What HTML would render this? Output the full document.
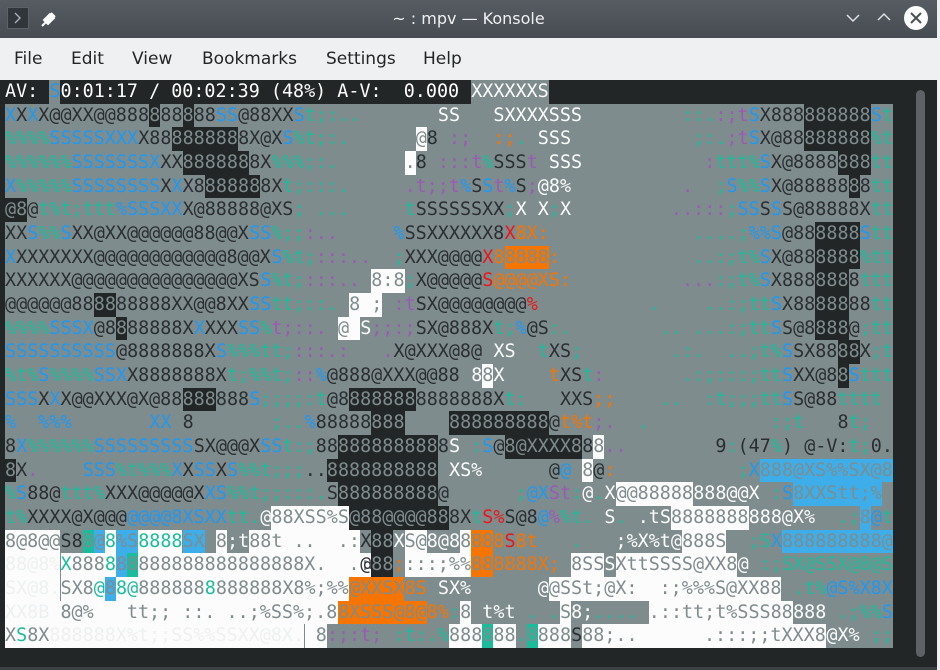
<!DOCTYPE html>
<html><head><meta charset="utf-8"><style>
*{margin:0;padding:0;box-sizing:border-box}
body{width:940px;height:670px;background:#eff0f1;position:relative;overflow:hidden;font-family:"DejaVu Sans Mono","Liberation Mono",monospace}
#win{position:absolute;left:0;top:0;width:937px;height:670px;background:#232627}
#tb{position:absolute;left:0;top:0;width:937px;height:38px;background:linear-gradient(#565c62,#464c52)}
#title{position:absolute;left:0;width:937px;top:9px;text-align:center;color:#eff0f1;font:16px "DejaVu Sans","Liberation Sans",sans-serif}
#mb{position:absolute;left:0;top:38px;width:937px;height:42px;background:#eff0f1;font:17px "DejaVu Sans","Liberation Sans",sans-serif;color:#232627}
#mb span{position:absolute;top:11px}
.r{position:absolute;left:0;width:937px;height:23.67px;font-size:18.4px}
.r.gr::before{content:"";position:absolute;left:5px;width:888px;top:0;height:23.67px;background:#7f8c8d}
.r i{position:absolute;left:calc(5px + var(--c)*11.1px);top:0;height:23.67px;line-height:23.67px;font-style:normal;white-space:pre;color:#2a2e32}
.r i.b{color:#1d99f3}.r i.g{color:#1abc9c}.r i.p{color:#9b59b6}.r i.o{color:#f67400}.r i.r{color:#ed1515}.r i.w{color:#fcfcfc}
.r i.k{background:#232627;color:#7f8c8d}.r i.W{background:#fcfcfc;color:#7f8c8d}.r i.O{background:#f67400;color:#7f8c8d}
.r i.B{background:#3daee9;color:#7f8c8d}.r i.G{background:#1abc9c;color:#7f8c8d}.r i.Y{background:#7f8c8d;color:#fcfcfc}
.r i.Wg{background:#fcfcfc;color:#1abc9c}.r i.Wf{background:#fcfcfc;color:#eef0f1}.r i.Gr{background:#7f8c8d;color:#2a2e32}
#sb{position:absolute;left:916px;top:90px;width:9px;height:567px;border-radius:5px;background:#5d6266}
</style></head><body>
<div id="win">
<div id="tb">
<div style="position:absolute;left:7px;top:7px;width:22px;height:22px;background:#31363b;border:1px solid #5b6167"></div>
<svg style="position:absolute;left:12px;top:11px" width="12" height="14"><path d="M3 2 L8 7 L3 12" stroke="#aab0b5" stroke-width="1.4" fill="none"/></svg>
<svg style="position:absolute;left:40px;top:10px" width="18" height="18"><path d="M6 12 L2 16 M6 12 L4 10 L10 4 L14 8 L8 14 Z M11 3 L15 7" stroke="#fcfcfc" stroke-width="2" fill="#fcfcfc"/></svg>
<div id="title">~ : mpv — Konsole</div>
<svg style="position:absolute;left:845px;top:12px" width="16" height="12"><path d="M2 3 L8 9 L14 3" stroke="#dfe1e3" stroke-width="1.5" fill="none"/></svg>
<svg style="position:absolute;left:876px;top:11px" width="16" height="12"><path d="M2 9 L8 3 L14 9" stroke="#dfe1e3" stroke-width="1.5" fill="none"/></svg>
<svg style="position:absolute;left:904px;top:6px" width="24" height="24"><circle cx="12" cy="12" r="12" fill="#fcfcfc"/><path d="M7 7 L17 17 M17 7 L7 17" stroke="#4a5056" stroke-width="2"/></svg>
</div>
<div id="mb"><span style="left:14px">File</span><span style="left:71px">Edit</span><span style="left:132px">View</span><span style="left:202px">Bookmarks</span><span style="left:326px">Settings</span><span style="left:423px">Help</span></div>

<div class="r" style="top:80px"><i style="--c:0" class="w">AV:</i><i style="--c:4;background:#7f8c8d" class="b">S</i><i style="--c:5" class="w">0:01:17 / 00:02:39 (48%) A-V:  0.000</i><i style="--c:42" class="Y">XXXXXXS</i></div>

<div class="r gr" style="top:103.7px"><i style="--c:0" class="b">X</i><i style="--c:1">X</i><i style="--c:2" class="b">X</i><i style="--c:3">X@@XX@@888</i><i style="--c:13" class="k">8</i><i style="--c:14">88</i><i style="--c:16" class="k">8</i><i style="--c:17">88</i><i style="--c:19" class="b">SS</i><i style="--c:21">@88XX</i><i style="--c:26" class="b">S</i><i style="--c:27" class="g">t;:..</i><i style="--c:39" class="w">SS</i><i style="--c:44" class="w">SXXXXSSS</i><i style="--c:61" class="g">::.</i><i style="--c:64" class="p">:;t</i><i style="--c:67" class="b">S</i><i style="--c:68">X888</i><i style="--c:72" class="k">888888</i><i style="--c:78" class="b">S</i><i style="--c:79" class="g">t</i></div>

<div class="r gr" style="top:127.3px"><i style="--c:0" class="g">%%%%</i><i style="--c:4" class="b">SSSSSXXX</i><i style="--c:12">X88</i><i style="--c:15" class="k">888888</i><i style="--c:21">8X@X</i><i style="--c:25" class="b">S</i><i style="--c:26" class="g">%t;:.</i><i style="--c:37" class="W">@</i><i style="--c:38">8</i><i style="--c:40" class="p">:;</i><i style="--c:44" class="o">:;</i><i style="--c:46" class="g">.</i><i style="--c:48" class="w">SSS</i><i style="--c:62" class="g">;:.</i><i style="--c:65" class="p">;t</i><i style="--c:67" class="b">S</i><i style="--c:68">X@88</i><i style="--c:72" class="k">888888</i><i style="--c:78" class="g">%t</i></div>

<div class="r gr" style="top:151px"><i style="--c:0" class="g">%%%%%%</i><i style="--c:6" class="b">SSSSSSSX</i><i style="--c:14">XX</i><i style="--c:16" class="k">888888</i><i style="--c:22">8X</i><i style="--c:24" class="g">%%%;:.</i><i style="--c:36" class="W">.</i><i style="--c:37">8</i><i style="--c:39" class="p">:::</i><i style="--c:42" class="p">t</i><i style="--c:43" class="g">%</i><i style="--c:44">SSS</i><i style="--c:47" class="p">t</i><i style="--c:49" class="w">SSS</i><i style="--c:63" class="p">:</i><i style="--c:64" class="g">ttt%</i><i style="--c:68" class="b">S</i><i style="--c:69">X@8888</i><i style="--c:75" class="k">888</i><i style="--c:78" class="g">tt</i></div>

<div class="r gr" style="top:174.7px"><i style="--c:0" class="b">X</i><i style="--c:1" class="g">%%%%%</i><i style="--c:6" class="b">SSSSSSSS</i><i style="--c:14">X</i><i style="--c:15" class="b">X</i><i style="--c:16">X8</i><i style="--c:18" class="k">88888</i><i style="--c:23">8X</i><i style="--c:25" class="g">t;:::.</i><i style="--c:36" class="p">.t;;t</i><i style="--c:41" class="b">%</i><i style="--c:42">S</i><i style="--c:43" class="b">S</i><i style="--c:44" class="p">t</i><i style="--c:45" class="b">%</i><i style="--c:46">S</i><i style="--c:47" class="p">;</i><i style="--c:48" class="w">@8%</i><i style="--c:61" class="p">.</i><i style="--c:64" class="g">;</i><i style="--c:65" class="b">S</i><i style="--c:66" class="g">%%</i><i style="--c:68" class="b">S</i><i style="--c:69">X@88888</i><i style="--c:76" class="k">8</i><i style="--c:77">8</i><i style="--c:78" class="g">tt</i></div>

<div class="r gr" style="top:198.3px"><i style="--c:0" class="k">@8</i><i style="--c:2">@</i><i style="--c:3" class="g">t%t;ttt</i><i style="--c:10" class="b">%SSSXX</i><i style="--c:16">X@88888@XS</i><i style="--c:26" class="g">;</i><i style="--c:28" class="g">...</i><i style="--c:36" class="g">t</i><i style="--c:37">SSSSSSXX</i><i style="--c:45" class="g">;</i><i style="--c:46" class="w">X</i><i style="--c:48" class="w">X</i><i style="--c:49" class="g">;</i><i style="--c:50" class="w">X</i><i style="--c:60" class="p">..:::</i><i style="--c:65" class="g">;</i><i style="--c:66" class="b">SS</i><i style="--c:68">S</i><i style="--c:69" class="b">S</i><i style="--c:70">S@88888X</i><i style="--c:78" class="g">tt</i></div>

<div class="r gr" style="top:222px"><i style="--c:0">XX</i><i style="--c:2" class="b">S</i><i style="--c:3" class="g">%%</i><i style="--c:5" class="b">S</i><i style="--c:6">XX@XX@@@@@@88@@X</i><i style="--c:22" class="b">SS</i><i style="--c:24" class="g">%;;</i><i style="--c:27" class="p">:..</i><i style="--c:35" class="b">%</i><i style="--c:36">SSXXXXXX8</i><i style="--c:45" class="r">X</i><i style="--c:46" class="o">8X:</i><i style="--c:62" class="g">....;</i><i style="--c:67" class="b">%%S</i><i style="--c:70">@88</i><i style="--c:73" class="k">8888</i><i style="--c:77" class="b">S</i><i style="--c:78" class="g">tt</i></div>

<div class="r gr" style="top:245.7px"><i style="--c:0" class="b">X</i><i style="--c:1">XXXXXXX@@@@@@@@@@@@8@@X</i><i style="--c:24" class="b">S</i><i style="--c:25" class="g">%t;</i><i style="--c:28" class="p">:::..</i><i style="--c:35" class="g">;</i><i style="--c:36">XXX@@@@</i><i style="--c:43" class="r">X</i><i style="--c:44" class="o">8</i><i style="--c:45" class="O">8888</i><i style="--c:49" class="o">:</i><i style="--c:62" class="g">..:;t%</i><i style="--c:68" class="b">S</i><i style="--c:69">X@88</i><i style="--c:73" class="k">8888</i><i style="--c:77" class="g">%tt</i></div>

<div class="r gr" style="top:269.3px"><i style="--c:0">XXXXXX@@@@@@@@@@@@@@@XS</i><i style="--c:23" class="b">S</i><i style="--c:24" class="g">%t;</i><i style="--c:27" class="p">:::..</i><i style="--c:33" class="W">8:8</i><i style="--c:36" class="g">;</i><i style="--c:37">X@@@@@</i><i style="--c:43" class="r">S</i><i style="--c:44" class="o">@@@@XS:</i><i style="--c:61" class="p">...</i><i style="--c:64" class="g">:;t%</i><i style="--c:68" class="b">S</i><i style="--c:69">X888</i><i style="--c:73" class="k">888</i><i style="--c:76">8</i><i style="--c:77" class="g">ttt</i></div>

<div class="r gr" style="top:293px"><i style="--c:0">@@@@@@88</i><i style="--c:8" class="k">88</i><i style="--c:10">88888XX@@8XX</i><i style="--c:22" class="b">SS</i><i style="--c:24" class="g">tt;::.</i><i style="--c:31" class="W">8 ;</i><i style="--c:35" class="p">:t</i><i style="--c:37">SX@@@@@@@@</i><i style="--c:47" class="r">%</i><i style="--c:58" class="g">.</i><i style="--c:63" class="g">..:;tt</i><i style="--c:69" class="b">S</i><i style="--c:70">X88</i><i style="--c:73" class="k">888</i><i style="--c:76">88</i><i style="--c:78" class="g">tt</i></div>

<div class="r gr" style="top:316.7px"><i style="--c:0" class="g">%%%%</i><i style="--c:4" class="b">SSSX</i><i style="--c:8">@8</i><i style="--c:10" class="k">8</i><i style="--c:11">88888X</i><i style="--c:17" class="b">X</i><i style="--c:18">XXX</i><i style="--c:21" class="b">SS</i><i style="--c:23" class="g">%</i><i style="--c:24" class="p">t;::.</i><i style="--c:30" class="W">@ </i><i style="--c:32" class="w">S</i><i style="--c:33" class="p">;;:;</i><i style="--c:37">SX@888X</i><i style="--c:44" class="g">t;</i><i style="--c:46" class="b">%</i><i style="--c:47">@S</i><i style="--c:49" class="g">:.</i><i style="--c:59" class="g">.. ...:;tt</i><i style="--c:69" class="b">S</i><i style="--c:70">S@8</i><i style="--c:73" class="k">888</i><i style="--c:76">@</i><i style="--c:77" class="g">;tt</i></div>

<div class="r gr" style="top:340.3px"><i style="--c:0" class="b">SSSSSSSSSS</i><i style="--c:10">@8888888X</i><i style="--c:19" class="b">S</i><i style="--c:20" class="g">%%%tt;</i><i style="--c:26" class="p">:::.:</i><i style="--c:34" class="p">.</i><i style="--c:35">X@XXX@8@</i><i style="--c:44" class="w">XS</i><i style="--c:48" class="g">t</i><i style="--c:49">XS</i><i style="--c:51" class="g">;</i><i style="--c:60" class="g">.:.  ..;t%</i><i style="--c:70" class="b">S</i><i style="--c:71">SX88</i><i style="--c:75" class="k">88</i><i style="--c:77">X</i><i style="--c:78" class="g">;t</i></div>

<div class="r gr" style="top:364px"><i style="--c:0" class="g">%t%</i><i style="--c:3" class="b">S</i><i style="--c:4" class="g">%%%%</i><i style="--c:8" class="b">SSX</i><i style="--c:11">X8888888X</i><i style="--c:20" class="g">t;%%t;</i><i style="--c:26" class="p">::</i><i style="--c:28" class="b">%</i><i style="--c:29">@888@XXX@@88</i><i style="--c:42" class="w">8</i><i style="--c:43" class="W">8</i><i style="--c:44" class="w">X</i><i style="--c:49" class="o">t</i><i style="--c:50">XS</i><i style="--c:52" class="g">t</i><i style="--c:53" class="p">:</i><i style="--c:61" class="g">.:;:::;tt</i><i style="--c:70" class="b">S</i><i style="--c:71">XX@8</i><i style="--c:75" class="k">8</i><i style="--c:76" class="b">S</i><i style="--c:77" class="g">ttt</i></div>

<div class="r gr" style="top:387.7px"><i style="--c:0" class="b">SSS</i><i style="--c:3">X</i><i style="--c:4" class="b">X</i><i style="--c:5">X@@XXX@X@88</i><i style="--c:16" class="k">888</i><i style="--c:19">888</i><i style="--c:22" class="b">S</i><i style="--c:23" class="g">;;;;:t</i><i style="--c:29">@8</i><i style="--c:31" class="k">888888</i><i style="--c:37">8888888X</i><i style="--c:45" class="g">t:</i><i style="--c:50">XXS</i><i style="--c:53" class="o">;;</i><i style="--c:59" class="g">..</i><i style="--c:63" class="g">:t;;;tt</i><i style="--c:70" class="b">S</i><i style="--c:71">S@88</i><i style="--c:75" class="g">tttt</i></div>

<div class="r gr" style="top:411.3px"><i style="--c:0" class="b">%</i><i style="--c:3" class="b">%%%</i><i style="--c:13" class="b">XX</i><i style="--c:16">8</i><i style="--c:24" class="g">;..</i><i style="--c:27" class="b">%</i><i style="--c:28">88888</i><i style="--c:33" class="k">888</i><i style="--c:40" class="k">888888888</i><i style="--c:49">@</i><i style="--c:50" class="o">t%t</i><i style="--c:53" class="p">;.</i><i style="--c:57" class="g">.</i><i style="--c:69" class="g">:;t</i><i style="--c:75">8</i><i style="--c:76" class="g">t;</i></div>

<div class="r gr" style="top:435px"><i style="--c:0">8</i><i style="--c:1" class="b">X</i><i style="--c:2" class="g">%%%%%%</i><i style="--c:8" class="b">SSSSSSSSS</i><i style="--c:17">SX@@@X</i><i style="--c:23" class="b">SS</i><i style="--c:25" class="g">t:;</i><i style="--c:28">88</i><i style="--c:30" class="k">888888888</i><i style="--c:39">8</i><i style="--c:40" class="w">S</i><i style="--c:42" class="g">:</i><i style="--c:43" class="b">S</i><i style="--c:44">@</i><i style="--c:45" class="k">8@XXXX8</i><i style="--c:52">8</i><i style="--c:53" class="W">8</i><i style="--c:54" class="p">..</i><i style="--c:64">9</i><i style="--c:65" class="g">:</i><i style="--c:66">(47</i><i style="--c:69" class="g">%</i><i style="--c:70">)</i><i style="--c:72">@-V:</i><i style="--c:76" class="g">t</i><i style="--c:77" class="g">;</i><i style="--c:78">0.</i></div>

<div class="r gr" style="top:458.7px"><i style="--c:0" class="k">8</i><i style="--c:1">X</i><i style="--c:2" class="p">.</i><i style="--c:7" class="b">SSS</i><i style="--c:10" class="g">%t%%%</i><i style="--c:15" class="b">X</i><i style="--c:16">X</i><i style="--c:17" class="b">SS</i><i style="--c:19">X</i><i style="--c:20" class="b">S</i><i style="--c:21" class="g">%%t;;;</i><i style="--c:27">..@</i><i style="--c:29" class="k">8888888888</i><i style="--c:40" class="w">XS%</i><i style="--c:49">@</i><i style="--c:50" class="b">@</i><i style="--c:52" class="W">8</i><i style="--c:53">@</i><i style="--c:54" class="o">:</i><i style="--c:66" class="g">;</i><i style="--c:67" class="b">X</i><i style="--c:68" class="B">888@XS%%SX@8</i></div>

<div class="r gr" style="top:482.3px"><i style="--c:0" class="g">%</i><i style="--c:1" class="b">S</i><i style="--c:2">88@</i><i style="--c:5" class="g">ttt%</i><i style="--c:9">XXX@@@@@X</i><i style="--c:18" class="b">XS</i><i style="--c:20" class="g">%%t;;:::.</i><i style="--c:29">S</i><i style="--c:30" class="k">888888888</i><i style="--c:39">@</i><i style="--c:46" class="g">;</i><i style="--c:47" class="b">@X</i><i style="--c:49" class="p">St</i><i style="--c:51" class="g">:</i><i style="--c:52" class="w">@</i><i style="--c:53" class="g">.</i><i style="--c:54" class="w">X</i><i style="--c:55" class="W">@@88888</i><i style="--c:62" class="w">888@@X</i><i style="--c:69" class="g">:</i><i style="--c:70" class="b">S</i><i style="--c:71" class="B">8XXStt;%</i></div>

<div class="r gr" style="top:506px"><i style="--c:0" class="g">t%</i><i style="--c:2">XXXX@X@@@</i><i style="--c:11" class="b">@@@@8XSXX</i><i style="--c:20" class="g">tt.</i><i style="--c:23" class="w">@</i><i style="--c:24" class="W">88XSS%S</i><i style="--c:31" class="k">@88@@@@88</i><i style="--c:40">8X</i><i style="--c:42" class="g">t</i><i style="--c:43" class="r">S%</i><i style="--c:45">S@8</i><i style="--c:48" class="b">@</i><i style="--c:49" class="p">%</i><i style="--c:50" class="g">%t.</i><i style="--c:54" class="w">S</i><i style="--c:55" class="g">.</i><i style="--c:57" class="w">.tS</i><i style="--c:60" class="W">8888888</i><i style="--c:67" class="w">888@X%</i><i style="--c:75" class="g">.;</i><i style="--c:77" class="B">8</i><i style="--c:78" class="b">@</i><i style="--c:79" class="g">t</i></div>

<div class="r gr" style="top:529.7px"><i style="--c:0" class="W">8@8@@</i><i style="--c:5" class="Gr" style="color:#fcfcfc">S8</i><i style="--c:7" class="G">8</i><i style="--c:8" class="B">@</i><i style="--c:9" class="Wg">8</i><i style="--c:10" class="B">%S</i><i style="--c:12" class="Wg">8888</i><i style="--c:16" class="B">SX</i><i style="--c:19" class="W">8</i><i style="--c:20" class="w">;t</i><i style="--c:22" class="W">88t ..  .:</i><i style="--c:32">X</i><i style="--c:33" class="k">88</i><i style="--c:35" class="w">X</i><i style="--c:36" class="W">S@</i><i style="--c:38" class="w">8@8</i><i style="--c:41" class="W">8</i><i style="--c:42" class="O">88</i><i style="--c:44" class="o">8</i><i style="--c:45" class="r">S</i><i style="--c:46" class="o">8t</i><i style="--c:51" class="g">.</i><i style="--c:55" class="w">;%X%t@</i><i style="--c:61" class="W">888S</i><i style="--c:67" class="g">;S</i><i style="--c:69" class="b">X</i><i style="--c:70" class="B">888888888@</i></div>

<div class="r gr" style="top:553.3px"><i style="--c:0" class="Wf">88@8%</i><i style="--c:5" class="Wg">X</i><i style="--c:6" class="W">888</i><i style="--c:9" class="Wg">8</i><i style="--c:10" class="B">8</i><i style="--c:11" class="G">8</i><i style="--c:12" class="W">888888888888888X.  .:</i><i style="--c:32">@</i><i style="--c:33" class="k">88</i><i style="--c:35" class="o">;</i><i style="--c:36" class="W">:::;%%</i><i style="--c:42" class="O">88</i><i style="--c:44" class="o">8888X;</i><i style="--c:51" class="W">8SS</i><i style="--c:54" class="w">S</i><i style="--c:55" class="W">XttSSSS@XX8</i><i style="--c:66" class="w">@</i><i style="--c:68" class="g">:;SX@SSX@8@S</i></div>

<div class="r gr" style="top:577px"><i style="--c:0" class="Wf">SX@8.</i><i style="--c:5" class="W">SX8</i><i style="--c:8" class="Wg">@</i><i style="--c:9" class="B">8</i><i style="--c:10" class="Wg">8@</i><i style="--c:12" class="W" style="color:#3daee9">8</i><i style="--c:13" class="W">88888</i><i style="--c:18" class="Wg">8</i><i style="--c:19" class="W">888888X8%;%%t</i><i style="--c:31" class="O" style="color:#fcfcfc">@</i><i style="--c:32" class="O">XXSX</i><i style="--c:36" class="o">8S</i><i style="--c:39" class="w">SX%</i><i style="--c:48" class="w">@</i><i style="--c:49" class="W">@SSt;@X:  :;%%%S@XX88</i><i style="--c:71" class="g">.t%</i><i style="--c:74" class="b">@S%X8X</i></div>

<div class="r gr" style="top:600.7px"><i style="--c:0" class="Wf">XX8B</i><i style="--c:4" class="W"> 8@%   tt;; ::. ..;%SS%;.88</i><i style="--c:30" class="O">8XSSS@8@</i><i style="--c:38" class="o">8%</i><i style="--c:40" class="g">:</i><i style="--c:41" class="W">8</i><i style="--c:43" class="w">t%t</i><i style="--c:47" class="g">.</i><i style="--c:49" class="g">.</i><i style="--c:50" class="W">S</i><i style="--c:51" class="w">8;</i><i style="--c:53" class="g">....</i><i style="--c:58" class="W">.::tt;t%SSS88</i><i style="--c:71" class="w">888</i><i style="--c:75" class="g">.;%%</i><i style="--c:79" class="b">S</i></div>

<div class="r gr" style="top:624.3px"><i style="--c:0" class="W">X</i><i style="--c:1" class="Wg">S</i><i style="--c:2" class="W">8X</i><i style="--c:4" class="Wf">888888X%t;;SS%%SSXX@8X.</i><i style="--c:27" class="W"> 8</i><i style="--c:29" class="p">:;:t;</i><i style="--c:35" class="g">:t:.</i><i style="--c:39" class="g">%</i><i style="--c:40" class="W">88</i><i style="--c:42" class="W">8</i><i style="--c:43" class="G">8</i><i style="--c:44" class="W">88</i><i style="--c:46" class="g">.</i><i style="--c:47" class="G">8</i><i style="--c:48" class="W">888</i><i style="--c:51">S</i><i style="--c:52" class="W">88;..      .:::;;tXXX8</i><i style="--c:74" class="w">@X%</i><i style="--c:78" class="g">;;</i></div>

<div id="sb"></div>
</div>
<div style="position:absolute;left:0;top:667px;width:937px;height:3px;background:#3b4045"></div>
</body></html>
